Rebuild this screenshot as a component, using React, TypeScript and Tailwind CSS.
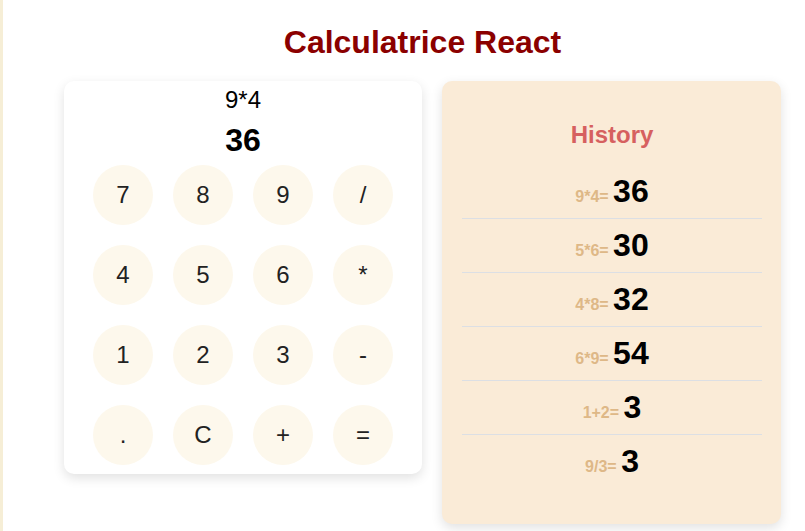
import React from "react";

const keys = ["7", "8", "9", "/", "4", "5", "6", "*", "1", "2", "3", "-", ".", "C", "+", "="];

const history = [
  { expr: "9*4", res: "36" },
  { expr: "5*6", res: "30" },
  { expr: "4*8", res: "32" },
  { expr: "6*9", res: "54" },
  { expr: "1+2", res: "3" },
  { expr: "9/3", res: "3" },
];

export default function App() {
  return (
    <div
      className="min-h-[531px] w-full border-l-[3px] border-[#f6eed6] bg-white pl-[37px] pt-[24px]"
      style={{ fontFamily: '"Liberation Sans", Arial, sans-serif' }}
    >
      <h1 className="text-center text-[32px] font-bold leading-[1.15] text-[#8b0000]">
        Calculatrice React
      </h1>
      <div className="mt-[20px] flex items-start justify-center gap-[20px]">
        <div className="flex w-[358px] flex-col items-center rounded-[10px] bg-white pt-[5px] pb-[9px] shadow-[0_4px_12px_rgba(0,0,0,0.12)]">
          <div className="text-[24px] leading-[1.15] text-black">9*4</div>
          <div className="mt-[9px] text-[32px] font-bold leading-[1.15] text-black">36</div>
          <div className="mt-[6px] grid grid-cols-4 gap-[20px]">
            {keys.map((k) => (
              <button
                key={k}
                className="flex h-[60px] w-[60px] items-center justify-center rounded-full bg-[#fdf8ec] text-[24px] leading-none text-[#222]"
              >
                {k}
              </button>
            ))}
          </div>
        </div>
        <div className="w-[339px] rounded-[10px] bg-[#faebd7] pl-[20px] pr-[19px] pt-[40px] pb-[35px] shadow-[0_4px_12px_rgba(0,0,0,0.12)]">
          <h2 className="mb-[17px] text-center text-[24px] font-bold leading-[1.15] text-[#d6605f]">
            History
          </h2>
          <ul>
            {history.map((h, i) => (
              <li
                key={i}
                className={
                  "h-[54px] pt-[8px] text-center text-[16px] leading-[1.15] " +
                  (i < history.length - 1 ? "border-b border-[#dcdfe4]" : "border-b border-transparent")
                }
              >
                <span className="font-bold text-[#deb887]">{h.expr}= </span>
                <span className="text-[32px] font-bold text-black">{h.res}</span>
              </li>
            ))}
          </ul>
        </div>
      </div>
    </div>
  );
}
